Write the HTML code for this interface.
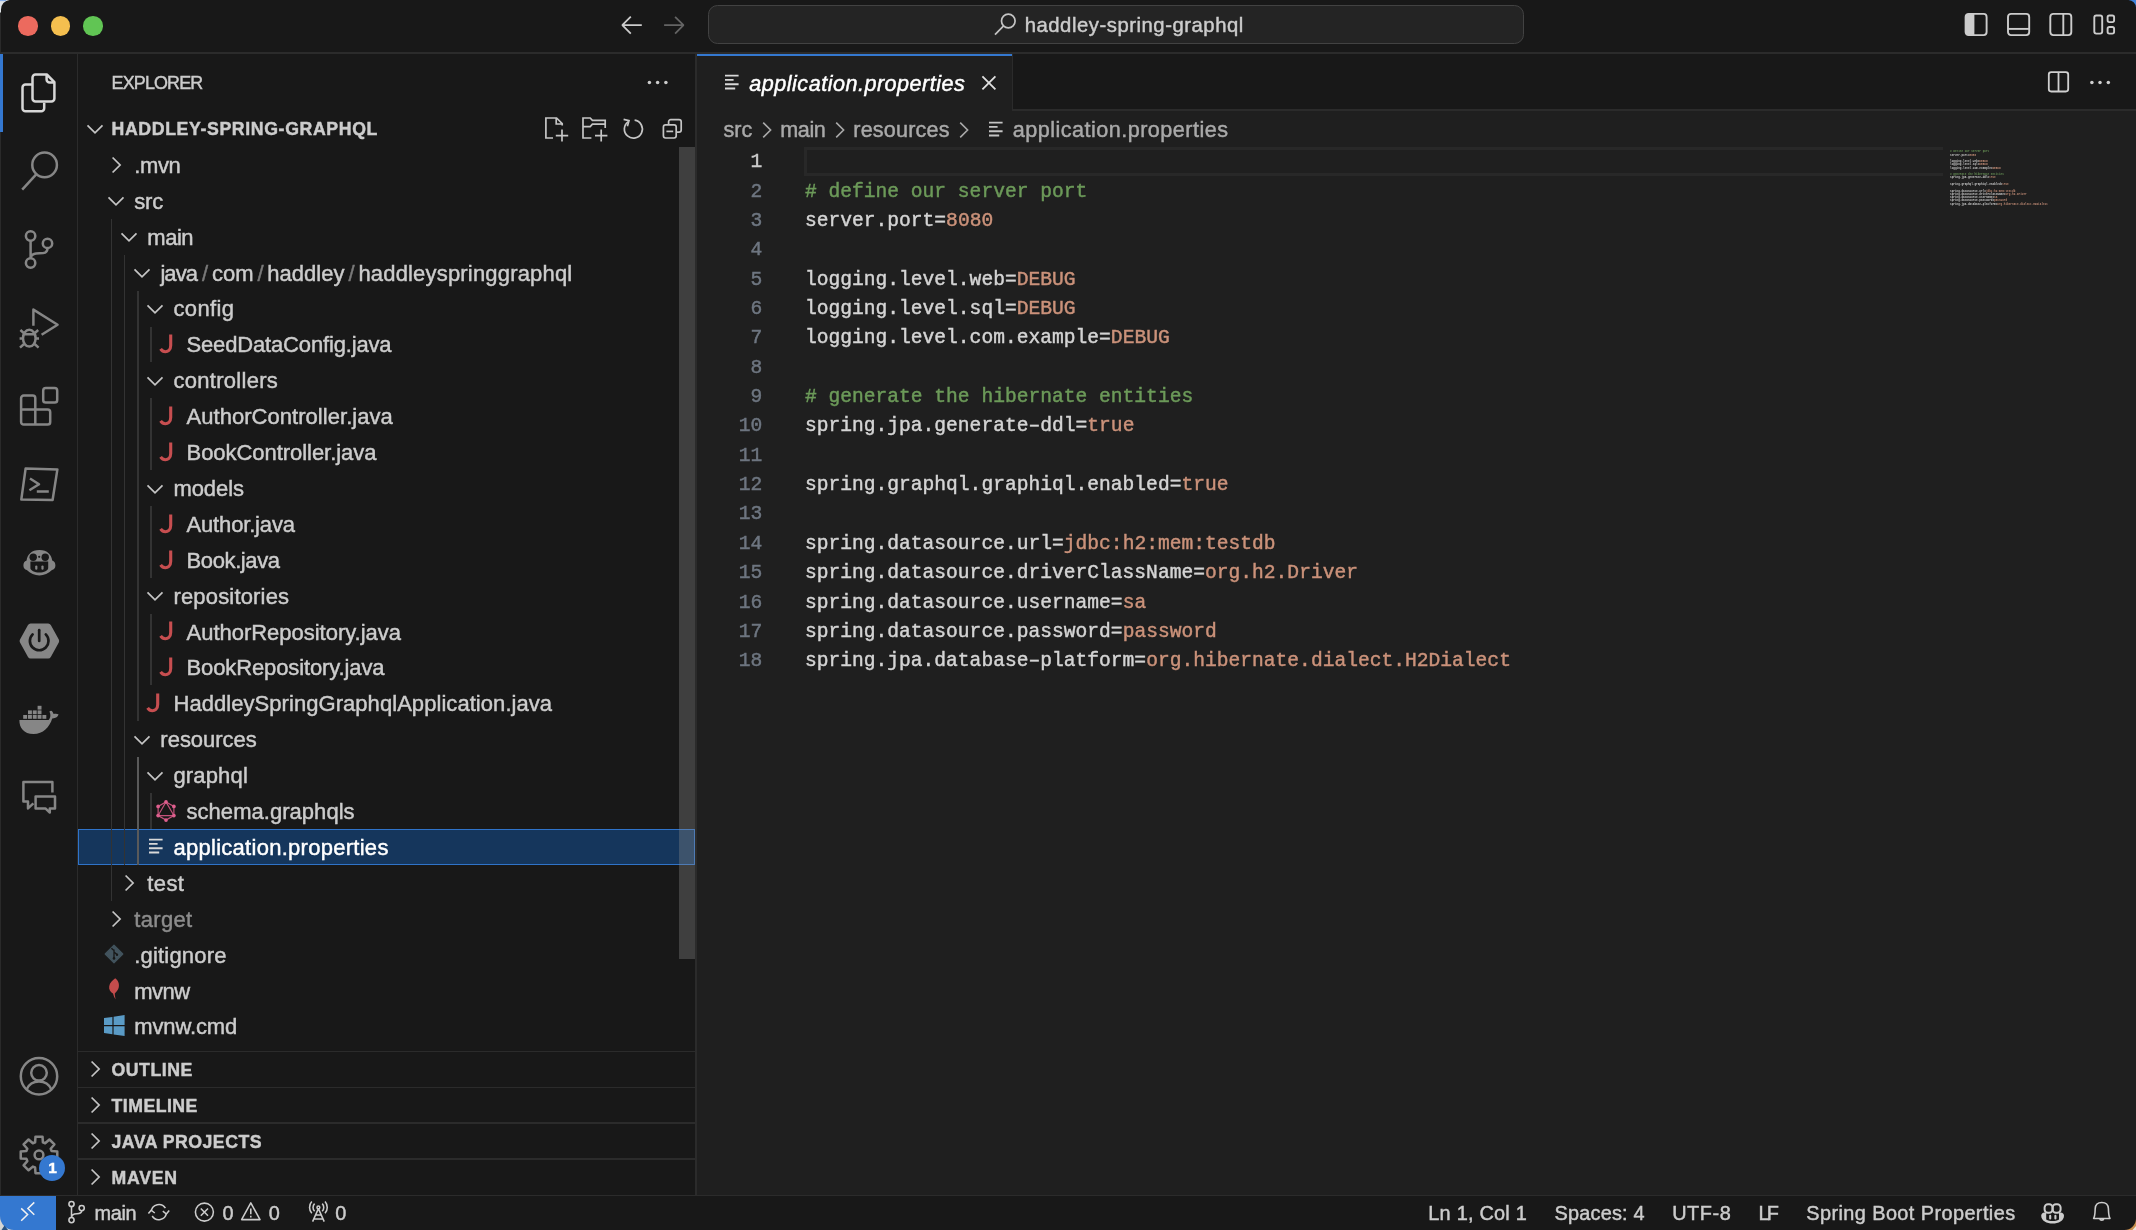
<!DOCTYPE html>
<html><head><meta charset="utf-8"><title>application.properties - haddley-spring-graphql</title>
<style>
html,body{margin:0;padding:0;background:#181818;overflow:hidden}
body{width:2136px;height:1230px;position:relative;font-family:"Liberation Sans", sans-serif;color:#ccc}
#app{position:absolute;left:0;top:0;width:2136px;height:1230px;will-change:transform;transform:translateZ(0)}
.a{position:absolute}
.t{position:absolute;white-space:pre;display:block;-webkit-text-stroke:0.45px currentColor}
svg{position:absolute;overflow:visible}

.bd{background:#2b2b2b}

</style></head><body>
<div id='app'>
<div class='a' style='left:697px;top:54px;width:1439px;height:1141px;background:#1f1f1f;'></div>
<div class='a' style='left:697px;top:54px;width:1439px;height:55px;background:#181818;'></div>
<div class='a' style='left:697px;top:109px;width:1439px;height:1.6px;background:#2b2b2b;'></div>
<div class='a' style='left:697px;top:54px;width:315px;height:57px;background:#1f1f1f;'></div>
<div class='a' style='left:1012px;top:54px;width:1.4px;height:55px;background:#2b2b2b;'></div>
<div class='a' style='left:0px;top:52.2px;width:2136px;height:1.8px;background:#2b2b2b;'></div>
<div class='a' style='left:697px;top:54.0px;width:315px;height:1.7px;background:#3478d0;'></div>
<div class='a' style='left:76.8px;top:54px;width:1.4px;height:1141px;background:#2b2b2b;'></div>
<div class='a' style='left:695.2px;top:54px;width:1.8px;height:1141px;background:#2b2b2b;'></div>
<div class='a' style='left:0px;top:1194.6px;width:2136px;height:1.5px;background:#2b2b2b;'></div>
<div class='a' style='left:0px;top:10px;width:1px;height:1210px;background:#2a2a2a;'></div>
<div class='a' style='left:0px;top:54px;width:3.3px;height:78px;background:#3478d0;'></div>
<div class='a' style='left:0px;top:1196px;width:55.5px;height:34px;background:#3478d0;'></div>
<svg style='left:0;top:0' width='14' height='14'><path d='M0 0H9.5A9.5 9.5 0 0 0 1 9.5V12.5H0Z' fill='#dfe3e6'/><path d='M0 0H6V1.1H0Z' fill='#86aee8'/></svg>
<svg style='left:2122px;top:0' width='14' height='14'><path d='M14 0H6.5A8 8 0 0 1 14 7.500Z' fill='#3f83db'/></svg>
<svg style='left:0;top:1214px' width='16' height='16'><path d='M0 16V2A14 14 0 0 0 14 16Z' fill='#d6d6d4'/><path d='M1.5 16 L4.5 11.500 L8 16Z' fill='#27507f'/></svg>
<svg style='left:2122px;top:1216px' width='14' height='14'><path d='M14 14V3A11.5 11.5 0 0 1 2.5 14Z' fill='#c98f4e'/><path d='M14 14V10L10.500 14Z' fill='#ece6dc'/></svg><div class='a' style='left:18.0px;top:16.1px;width:19.6px;height:19.6px;border-radius:50%;background:#ec6a5e'></div>
<div class='a' style='left:50.5px;top:16.1px;width:19.6px;height:19.6px;border-radius:50%;background:#f4bf4f'></div>
<div class='a' style='left:83.1px;top:16.1px;width:19.6px;height:19.6px;border-radius:50%;background:#61c554'></div>
<svg style='left:615px;top:10px' width='30' height='30' viewBox='0 0 30 30' ><path d='M26.8 15.2H7.6 M15.8 6.7 L7.3 15.2 L15.8 23.7' fill='none' stroke='#cccccc' stroke-width='1.8' stroke-linejoin='bevel'/></svg>
<svg style='left:660px;top:10px' width='30' height='30' viewBox='0 0 30 30' ><path d='M4.1 15.2H23.2 M15.1 6.8 L23.5 15.2 L15.1 23.6' fill='none' stroke='#646464' stroke-width='1.8' stroke-linejoin='bevel'/></svg>
<div class='a' style='left:708px;top:5px;width:816px;height:39px;box-sizing:border-box;border:1.8px solid #424242;border-radius:9.5px;background:#242424'></div>
<svg style='left:990px;top:10px' width='30' height='30' viewBox='0 0 30 30' ><circle cx='18.3' cy='11' r='6.8' fill='none' stroke='#c4c4c4' stroke-width='1.7'/><path d='M13.6 15.9 L5 24.6' stroke='#c4c4c4' stroke-width='1.7' fill='none'/></svg>
<span class='t' style='left:1024.70px;top:9.00px;font:normal 400 20.3px/32px "Liberation Sans", sans-serif;color:#cccccc;letter-spacing:0.531px;'>haddley-spring-graphql</span>
<svg style='left:1962px;top:10px' width='30' height='30' viewBox='0 0 30 30' ><rect x='3.6' y='3.9' width='21' height='21.2' rx='3' fill='none' stroke='#cccccc' stroke-width='1.9'/><path d='M3.6 6.9 a3 3 0 0 1 3-3 H12.4 V25.1 H6.6 a3 3 0 0 1 -3-3Z' fill='#cccccc'/></svg>
<svg style='left:2004px;top:10px' width='30' height='30' viewBox='0 0 30 30' ><rect x='4' y='3.9' width='21.2' height='21.2' rx='3' fill='none' stroke='#cccccc' stroke-width='1.9'/><path d='M4 18.9H25.2' fill='none' stroke='#cccccc' stroke-width='1.9'/></svg>
<svg style='left:2046px;top:10px' width='30' height='30' viewBox='0 0 30 30' ><rect x='4.3' y='3.9' width='21' height='21.2' rx='3' fill='none' stroke='#cccccc' stroke-width='1.9'/><path d='M17.3 3.9V25.1' fill='none' stroke='#cccccc' stroke-width='1.9'/></svg>
<svg style='left:2090px;top:10px' width='30' height='30' viewBox='0 0 30 30' ><rect x='4.3' y='5.5' width='7.9' height='18.1' rx='2' fill='none' stroke='#cccccc' stroke-width='1.9'/><rect x='17.6' y='5.5' width='6.5' height='6.6' rx='1.8' fill='none' stroke='#cccccc' stroke-width='1.9'/><rect x='17.6' y='17' width='6.5' height='6.6' rx='1.8' fill='none' stroke='#cccccc' stroke-width='1.9'/></svg>
<svg style='left:15px;top:66px' width='50' height='54' viewBox='0 0 50 54' ><path d='M20.2 18.6 H10.5 a3 3 0 0 0 -3 3 V42.2 a3 3 0 0 0 3 3 H26.2 a3 3 0 0 0 3 -3 V36.8' fill='none' stroke='#d7d7d7' stroke-width='2.5' stroke-linejoin='round' stroke-linecap='butt'/><rect x='17.5' y='8.5' width='22' height='27' rx='3.4' fill='#181818' stroke='none'/><path d='M20.5 8.5 H31.8 L39.4 16.2 V32.5 a3 3 0 0 1 -3 3 H20.5 a3 3 0 0 1 -3 -3 V11.5 a3 3 0 0 1 3 -3 Z M31.6 8.9 V13.4 a3 3 0 0 0 3 3 H39.2' fill='none' stroke='#d7d7d7' stroke-width='2.5' stroke-linejoin='round' stroke-linecap='butt'/></svg>
<svg style='left:15px;top:145px' width='50' height='54' viewBox='0 0 50 54' ><circle cx='29.6' cy='19.9' r='12.3' fill='none' stroke='#868686' stroke-width='2.5' stroke-linejoin='round' stroke-linecap='butt'/><path d='M21.2 29.4 L7.2 44.6' fill='none' stroke='#868686' stroke-width='2.5' stroke-linejoin='round' stroke-linecap='butt'/></svg>
<svg style='left:15px;top:223px' width='50' height='54' viewBox='0 0 50 54' ><circle cx='15.6' cy='13' r='4.7' fill='none' stroke='#868686' stroke-width='2.5' stroke-linejoin='round' stroke-linecap='butt'/><circle cx='32.5' cy='20.4' r='4.7' fill='none' stroke='#868686' stroke-width='2.5' stroke-linejoin='round' stroke-linecap='butt'/><circle cx='15.6' cy='40' r='4.7' fill='none' stroke='#868686' stroke-width='2.5' stroke-linejoin='round' stroke-linecap='butt'/><path d='M15.6 17.7 V35.3 M32.5 25.1 C32.5 31.5 27 30 21 30.4 C17.5 30.8 15.8 32.6 15.6 35.3' fill='none' stroke='#868686' stroke-width='2.5' stroke-linejoin='round' stroke-linecap='butt'/></svg>
<svg style='left:15px;top:301px' width='50' height='54' viewBox='0 0 50 54' ><path d='M18.4 24.8 V8.6 L42.6 23.7 L26.6 33.8' fill='none' stroke='#868686' stroke-width='2.5' stroke-linejoin='round' stroke-linecap='butt'/><ellipse cx='14.3' cy='37.2' rx='6.3' ry='8.4' fill='none' stroke='#868686' stroke-width='2.5' stroke-linejoin='round' stroke-linecap='butt'/><path d='M8.4 33.3 H20.2 M4.6 37.6 H8 M20.6 37.6 H24 M9 32.2 L5.4 29 M19.6 32.2 L23.2 29 M9 43 L5 46.6 M19.6 43 L23.6 46.6' fill='none' stroke='#868686' stroke-width='2.5' stroke-linejoin='round' stroke-linecap='butt'/></svg>
<svg style='left:15px;top:380px' width='50' height='54' viewBox='0 0 50 54' ><rect x='28.2' y='8.1' width='14' height='14.4' rx='2.6' fill='none' stroke='#868686' stroke-width='2.5' stroke-linejoin='round' stroke-linecap='butt'/><path d='M8.7 15.6 H17.7 a2.6 2.6 0 0 1 2.6 2.6 V29.6 H32.6 a2.6 2.6 0 0 1 2.6 2.6 V42 a2.6 2.6 0 0 1 -2.6 2.6 H8.7 a2.6 2.6 0 0 1 -2.6 -2.6 V18.2 a2.6 2.6 0 0 1 2.6 -2.6 Z M6.1 29.6 H20.3 V44.6' fill='none' stroke='#868686' stroke-width='2.5' stroke-linejoin='round' stroke-linecap='butt'/></svg>
<svg style='left:15px;top:458px' width='50' height='54' viewBox='0 0 50 54' ><path d='M10.6 10.6 L42.4 11.4 L37.6 42 L6.3 41.6 Z' fill='none' stroke='#868686' stroke-width='2.5' stroke-linejoin='round' stroke-linecap='butt'/><path d='M15 20.5 L24 26.3 L14.4 32.2 M21.8 33.5 H33.8' fill='none' stroke='#868686' stroke-width='2.5' stroke-linejoin='round' stroke-linecap='butt'/></svg>
<svg style='left:15px;top:536px' width='50' height='54' viewBox='0 0 50 54' ><path d='M24.4 14 C32.5 14 36.6 19 37.2 24.4 C39.4 25 40.4 27 40.4 29.4 C40.4 32 39 33.4 37 34 C33.6 37.4 29 39.4 24.4 39.4 C19.8 39.4 15.2 37.4 11.8 34 C9.8 33.4 8.4 32 8.4 29.4 C8.4 27 9.4 25 11.6 24.4 C12.2 19 16.3 14 24.4 14 Z' fill='#868686'/><circle cx='18.2' cy='21.2' r='3.7' fill='#181818'/><circle cx='30.2' cy='21.2' r='3.7' fill='#181818'/><circle cx='24.2' cy='20.8' r='1.1' fill='#181818'/><path d='M15.4 25.6 H33.2 V32 C33.2 34.6 29 36.6 24.3 36.6 C19.6 36.6 15.4 34.6 15.4 32 Z' fill='#181818'/><rect x='20.2' y='29.4' width='2.2' height='4.4' rx='1.1' fill='#868686'/><rect x='26.4' y='29.4' width='2.2' height='4.4' rx='1.1' fill='#868686'/></svg>
<svg style='left:15px;top:614px' width='50' height='54' viewBox='0 0 50 54' ><path d='M15.6 9.6 H33.2 a3 3 0 0 1 2.6 1.5 L43.8 25.5 a3 3 0 0 1 0 3 L35.8 42.9 a3 3 0 0 1 -2.6 1.5 H15.6 a3 3 0 0 1 -2.6 -1.5 L5 28.5 a3 3 0 0 1 0 -3 L13 11.100 a3 3 0 0 1 2.6 -1.5 Z' fill='#868686'/><path d='M17.6 20.4 A9.3 9.3 0 1 0 30.8 20.4' fill='none' stroke='#181818' stroke-width='2.7' stroke-linecap='round'/><path d='M24.2 16.2 V27' stroke='#181818' stroke-width='2.7' stroke-linecap='round'/></svg>
<svg style='left:15px;top:692px' width='50' height='54' viewBox='0 0 50 54' ><g fill='#868686'><rect x='8.2' y='23.0' width='3.9' height='3.8'/><rect x='13.0' y='23.0' width='3.9' height='3.8'/><rect x='17.8' y='23.0' width='3.9' height='3.8'/><rect x='22.6' y='23.0' width='3.9' height='3.8'/><rect x='27.4' y='23.0' width='3.9' height='3.8'/><rect x='13.0' y='18.4' width='3.9' height='3.8'/><rect x='17.8' y='18.4' width='3.9' height='3.8'/><rect x='22.6' y='18.4' width='3.9' height='3.8'/><rect x='22.6' y='13.8' width='3.9' height='3.8'/><path d='M4.4 28 H33.6 C35.6 26.4 36 22.6 34.4 19.6 C36.6 17.4 37.6 19.6 38.6 22 C40.6 21.4 42.6 21.6 43.6 22.6 C42.6 25.4 39.8 26.6 37.2 26.4 C34.6 35 28 42 18.6 42 C8.6 42 4.2 35.6 4.4 28 Z'/></g></svg>
<svg style='left:15px;top:771px' width='50' height='54' viewBox='0 0 50 54' ><path d='M37.4 21.6 V11 H8.4 V30.4 H13 V37.4 L18.4 32.4' fill='none' stroke='#868686' stroke-width='2.5' stroke-linejoin='round' stroke-linecap='butt'/><path d='M20.6 25.6 H40 V37.4 H34.8 V41.6 L30.4 37.4 H20.6 Z' fill='none' stroke='#868686' stroke-width='2.5' stroke-linejoin='round' stroke-linecap='butt'/></svg>
<svg style='left:15px;top:1050px' width='50' height='54' viewBox='0 0 50 54' ><circle cx='24' cy='26.3' r='18.2' fill='none' stroke='#868686' stroke-width='2.5' stroke-linejoin='round' stroke-linecap='butt'/><circle cx='24' cy='22.8' r='7.8' fill='none' stroke='#868686' stroke-width='2.5' stroke-linejoin='round' stroke-linecap='butt'/><path d='M11.6 39.4 C14 33.8 18.4 31.4 24 31.4 C29.6 31.4 34 33.8 36.4 39.4' fill='none' stroke='#868686' stroke-width='2.5' stroke-linejoin='round' stroke-linecap='butt'/></svg>
<svg style='left:15px;top:1127px' width='50' height='54' viewBox='0 0 50 54' ><path d='M20.10 15.29 L20.49 9.63 L27.51 9.63 L27.90 15.29 L30.16 16.22 L34.43 12.50 L39.40 17.47 L35.68 21.74 L36.61 24.00 L42.27 24.39 L42.27 31.41 L36.61 31.80 L35.68 34.06 L39.40 38.33 L34.43 43.30 L30.16 39.58 L27.90 40.51 L27.51 46.17 L20.49 46.17 L20.10 40.51 L17.84 39.58 L13.57 43.30 L8.60 38.33 L12.32 34.06 L11.39 31.80 L5.73 31.41 L5.73 24.39 L11.39 24.00 L12.32 21.74 L8.60 17.47 L13.57 12.50 L17.84 16.22 Z' fill='none' stroke='#868686' stroke-width='2.5' stroke-linejoin='round' stroke-linecap='butt'/><circle cx='24' cy='27.9' r='4.4' fill='none' stroke='#868686' stroke-width='2.5' stroke-linejoin='round' stroke-linecap='butt'/></svg>
<div class='a' style='left:39.4px;top:1154.9px;width:26px;height:26px;border-radius:50%;background:#3478d0'></div>
<span class='t' style='left:48.20px;top:1158.20px;font:normal 700 15.5px/20px "Liberation Sans", sans-serif;color:#ffffff;letter-spacing:0.000px;'>1</span><div class='a' style='left:78.4px;top:828.60px;width:616.6px;height:36.30px;background:#15365c;box-sizing:border-box;border:1.6px solid #2f73c9'></div>
<div class='a' style='left:110.65px;top:218.80px;width:1.7px;height:682.10px;background:#333333'></div>
<div class='a' style='left:123.75px;top:254.70px;width:1.7px;height:610.30px;background:#333333'></div>
<div class='a' style='left:136.85px;top:290.60px;width:1.7px;height:430.80px;background:#333333'></div>
<div class='a' style='left:136.85px;top:757.30px;width:1.7px;height:107.70px;background:#5a5a5a'></div>
<div class='a' style='left:149.95px;top:326.50px;width:1.7px;height:35.90px;background:#333333'></div>
<div class='a' style='left:149.95px;top:398.30px;width:1.7px;height:71.80px;background:#333333'></div>
<div class='a' style='left:149.95px;top:506.00px;width:1.7px;height:71.80px;background:#333333'></div>
<div class='a' style='left:149.95px;top:613.70px;width:1.7px;height:71.80px;background:#333333'></div>
<div class='a' style='left:149.95px;top:793.20px;width:1.7px;height:35.90px;background:#333333'></div>
<svg style='left:106.0px;top:154.95px' width='20' height='20' viewBox='0 0 20 20' ><path d='M6.6 2.5 L14.1 10 L6.6 17.5' fill='none' stroke='#c5c5c5' stroke-width='1.7' stroke-linecap='butt' stroke-linejoin='miter'/></svg>
<span class='t' style='left:134.20px;top:147.85px;font:normal 400 22px/36px "Liberation Sans", sans-serif;color:#cccccc;letter-spacing:-0.362px;'>.mvn</span>
<svg style='left:106.0px;top:191.35px' width='20' height='20' viewBox='0 0 20 20' ><path d='M2.5 6.3 L10 13.8 L17.5 6.3' fill='none' stroke='#c5c5c5' stroke-width='1.7' stroke-linecap='butt' stroke-linejoin='miter'/></svg>
<span class='t' style='left:134.20px;top:183.75px;font:normal 400 22px/36px "Liberation Sans", sans-serif;color:#cccccc;letter-spacing:-0.114px;'>src</span>
<svg style='left:119.08000000000001px;top:227.25px' width='20' height='20' viewBox='0 0 20 20' ><path d='M2.5 6.3 L10 13.8 L17.5 6.3' fill='none' stroke='#c5c5c5' stroke-width='1.7' stroke-linecap='butt' stroke-linejoin='miter'/></svg>
<span class='t' style='left:147.28px;top:219.65px;font:normal 400 22px/36px "Liberation Sans", sans-serif;color:#cccccc;letter-spacing:-0.456px;'>main</span>
<svg style='left:132.16px;top:263.15px' width='20' height='20' viewBox='0 0 20 20' ><path d='M2.5 6.3 L10 13.8 L17.5 6.3' fill='none' stroke='#c5c5c5' stroke-width='1.7' stroke-linecap='butt' stroke-linejoin='miter'/></svg>
<span class='t' style='left:160.40px;top:255.55px;font:normal 400 22px/36px "Liberation Sans", sans-serif;color:#cccccc;letter-spacing:-0.920px;'>java</span>
<span class='t' style='left:212.00px;top:255.55px;font:normal 400 22px/36px "Liberation Sans", sans-serif;color:#cccccc;letter-spacing:0.019px;'>com</span>
<span class='t' style='left:267.30px;top:255.55px;font:normal 400 22px/36px "Liberation Sans", sans-serif;color:#cccccc;letter-spacing:0.004px;'>haddley</span>
<span class='t' style='left:358.40px;top:255.55px;font:normal 400 22px/36px "Liberation Sans", sans-serif;color:#cccccc;letter-spacing:0.180px;'>haddleyspringgraphql</span>
<span class='t' style='left:202.00px;top:255.55px;font:normal 400 22px/36px "Liberation Sans", sans-serif;color:#7a7a7a;letter-spacing:0.000px;'>/</span>
<span class='t' style='left:257.40px;top:255.55px;font:normal 400 22px/36px "Liberation Sans", sans-serif;color:#7a7a7a;letter-spacing:0.000px;'>/</span>
<span class='t' style='left:348.40px;top:255.55px;font:normal 400 22px/36px "Liberation Sans", sans-serif;color:#7a7a7a;letter-spacing:0.000px;'>/</span>
<svg style='left:145.24px;top:299.05px' width='20' height='20' viewBox='0 0 20 20' ><path d='M2.5 6.3 L10 13.8 L17.5 6.3' fill='none' stroke='#c5c5c5' stroke-width='1.7' stroke-linecap='butt' stroke-linejoin='miter'/></svg>
<span class='t' style='left:173.44px;top:291.45px;font:normal 400 22px/36px "Liberation Sans", sans-serif;color:#cccccc;letter-spacing:0.388px;'>config</span>
<span class='t' style='left:186.52px;top:327.35px;font:normal 400 22px/36px "Liberation Sans", sans-serif;color:#cccccc;letter-spacing:-0.158px;'>SeedDataConfig.java</span>
<svg style='left:158.21999999999997px;top:333.25px' width='18' height='24' viewBox='0 0 18 24' ><path d='M12.7 1.6 V12.6 C12.7 17.4 9.6 18.7 7.4 18.7 C5.3 18.7 3.7 17.6 2.6 15.9' fill='none' stroke='#c74e50' stroke-width='3.1'/></svg>
<svg style='left:145.24px;top:370.84999999999997px' width='20' height='20' viewBox='0 0 20 20' ><path d='M2.5 6.3 L10 13.8 L17.5 6.3' fill='none' stroke='#c5c5c5' stroke-width='1.7' stroke-linecap='butt' stroke-linejoin='miter'/></svg>
<span class='t' style='left:173.44px;top:363.25px;font:normal 400 22px/36px "Liberation Sans", sans-serif;color:#cccccc;letter-spacing:0.288px;'>controllers</span>
<span class='t' style='left:186.52px;top:399.15px;font:normal 400 22px/36px "Liberation Sans", sans-serif;color:#cccccc;letter-spacing:0.041px;'>AuthorController.java</span>
<svg style='left:158.21999999999997px;top:405.04999999999995px' width='18' height='24' viewBox='0 0 18 24' ><path d='M12.7 1.6 V12.6 C12.7 17.4 9.6 18.7 7.4 18.7 C5.3 18.7 3.7 17.6 2.6 15.9' fill='none' stroke='#c74e50' stroke-width='3.1'/></svg>
<span class='t' style='left:186.52px;top:435.05px;font:normal 400 22px/36px "Liberation Sans", sans-serif;color:#cccccc;letter-spacing:-0.045px;'>BookController.java</span>
<svg style='left:158.21999999999997px;top:440.95px' width='18' height='24' viewBox='0 0 18 24' ><path d='M12.7 1.6 V12.6 C12.7 17.4 9.6 18.7 7.4 18.7 C5.3 18.7 3.7 17.6 2.6 15.9' fill='none' stroke='#c74e50' stroke-width='3.1'/></svg>
<svg style='left:145.24px;top:478.54999999999995px' width='20' height='20' viewBox='0 0 20 20' ><path d='M2.5 6.3 L10 13.8 L17.5 6.3' fill='none' stroke='#c5c5c5' stroke-width='1.7' stroke-linecap='butt' stroke-linejoin='miter'/></svg>
<span class='t' style='left:173.44px;top:470.95px;font:normal 400 22px/36px "Liberation Sans", sans-serif;color:#cccccc;letter-spacing:-0.072px;'>models</span>
<span class='t' style='left:186.52px;top:506.85px;font:normal 400 22px/36px "Liberation Sans", sans-serif;color:#cccccc;letter-spacing:-0.160px;'>Author.java</span>
<svg style='left:158.21999999999997px;top:512.75px' width='18' height='24' viewBox='0 0 18 24' ><path d='M12.7 1.6 V12.6 C12.7 17.4 9.6 18.7 7.4 18.7 C5.3 18.7 3.7 17.6 2.6 15.9' fill='none' stroke='#c74e50' stroke-width='3.1'/></svg>
<span class='t' style='left:186.52px;top:542.75px;font:normal 400 22px/36px "Liberation Sans", sans-serif;color:#cccccc;letter-spacing:-0.381px;'>Book.java</span>
<svg style='left:158.21999999999997px;top:548.65px' width='18' height='24' viewBox='0 0 18 24' ><path d='M12.7 1.6 V12.6 C12.7 17.4 9.6 18.7 7.4 18.7 C5.3 18.7 3.7 17.6 2.6 15.9' fill='none' stroke='#c74e50' stroke-width='3.1'/></svg>
<svg style='left:145.24px;top:586.25px' width='20' height='20' viewBox='0 0 20 20' ><path d='M2.5 6.3 L10 13.8 L17.5 6.3' fill='none' stroke='#c5c5c5' stroke-width='1.7' stroke-linecap='butt' stroke-linejoin='miter'/></svg>
<span class='t' style='left:173.44px;top:578.65px;font:normal 400 22px/36px "Liberation Sans", sans-serif;color:#cccccc;letter-spacing:0.176px;'>repositories</span>
<span class='t' style='left:186.52px;top:614.55px;font:normal 400 22px/36px "Liberation Sans", sans-serif;color:#cccccc;letter-spacing:-0.017px;'>AuthorRepository.java</span>
<svg style='left:158.21999999999997px;top:620.45px' width='18' height='24' viewBox='0 0 18 24' ><path d='M12.7 1.6 V12.6 C12.7 17.4 9.6 18.7 7.4 18.7 C5.3 18.7 3.7 17.6 2.6 15.9' fill='none' stroke='#c74e50' stroke-width='3.1'/></svg>
<span class='t' style='left:186.52px;top:650.45px;font:normal 400 22px/36px "Liberation Sans", sans-serif;color:#cccccc;letter-spacing:-0.114px;'>BookRepository.java</span>
<svg style='left:158.21999999999997px;top:656.3499999999999px' width='18' height='24' viewBox='0 0 18 24' ><path d='M12.7 1.6 V12.6 C12.7 17.4 9.6 18.7 7.4 18.7 C5.3 18.7 3.7 17.6 2.6 15.9' fill='none' stroke='#c74e50' stroke-width='3.1'/></svg>
<span class='t' style='left:173.44px;top:686.35px;font:normal 400 22px/36px "Liberation Sans", sans-serif;color:#cccccc;letter-spacing:0.056px;'>HaddleySpringGraphqlApplication.java</span>
<svg style='left:145.14px;top:692.25px' width='18' height='24' viewBox='0 0 18 24' ><path d='M12.7 1.6 V12.6 C12.7 17.4 9.6 18.7 7.4 18.7 C5.3 18.7 3.7 17.6 2.6 15.9' fill='none' stroke='#c74e50' stroke-width='3.1'/></svg>
<svg style='left:132.16px;top:729.85px' width='20' height='20' viewBox='0 0 20 20' ><path d='M2.5 6.3 L10 13.8 L17.5 6.3' fill='none' stroke='#c5c5c5' stroke-width='1.7' stroke-linecap='butt' stroke-linejoin='miter'/></svg>
<span class='t' style='left:160.36px;top:722.25px;font:normal 400 22px/36px "Liberation Sans", sans-serif;color:#cccccc;letter-spacing:-0.019px;'>resources</span>
<svg style='left:145.24px;top:765.75px' width='20' height='20' viewBox='0 0 20 20' ><path d='M2.5 6.3 L10 13.8 L17.5 6.3' fill='none' stroke='#c5c5c5' stroke-width='1.7' stroke-linecap='butt' stroke-linejoin='miter'/></svg>
<span class='t' style='left:173.44px;top:758.15px;font:normal 400 22px/36px "Liberation Sans", sans-serif;color:#cccccc;letter-spacing:0.162px;'>graphql</span>
<span class='t' style='left:186.52px;top:794.05px;font:normal 400 22px/36px "Liberation Sans", sans-serif;color:#cccccc;letter-spacing:0.038px;'>schema.graphqls</span>
<svg style='left:154.0px;top:798.55px' width='24' height='24' viewBox='0 0 24 24' ><path d='M12.00 2.90 L19.88 7.45 L19.88 16.55 L12.00 21.10 L4.12 16.55 L4.12 7.45 Z' fill='none' stroke='#c2527a' stroke-width='1.2'/><path d='M12.00 2.90 L19.88 16.55 L4.12 16.55 Z' fill='none' stroke='#c2527a' stroke-width='1.2'/><circle cx='12.00' cy='2.90' r='1.85' fill='#df5f8e'/><circle cx='19.88' cy='7.45' r='1.85' fill='#df5f8e'/><circle cx='19.88' cy='16.55' r='1.85' fill='#df5f8e'/><circle cx='12.00' cy='21.10' r='1.85' fill='#df5f8e'/><circle cx='4.12' cy='16.55' r='1.85' fill='#df5f8e'/><circle cx='4.12' cy='7.45' r='1.85' fill='#df5f8e'/></svg>
<span class='t' style='left:173.44px;top:829.95px;font:normal 400 22px/36px "Liberation Sans", sans-serif;color:#ffffff;letter-spacing:0.277px;'>application.properties</span>
<svg style='left:149.24px;top:837.45px' width='16' height='18' viewBox='0 0 16 18' ><path d='M0 2.6H13.6 M0 6.9H8.6 M0 11.2H13.6 M0 15.5H10.2' stroke='#d8d8d8' stroke-width='1.9' fill='none'/></svg>
<svg style='left:119.08000000000001px;top:872.95px' width='20' height='20' viewBox='0 0 20 20' ><path d='M6.6 2.5 L14.1 10 L6.6 17.5' fill='none' stroke='#c5c5c5' stroke-width='1.7' stroke-linecap='butt' stroke-linejoin='miter'/></svg>
<span class='t' style='left:147.28px;top:865.85px;font:normal 400 22px/36px "Liberation Sans", sans-serif;color:#cccccc;letter-spacing:0.417px;'>test</span>
<svg style='left:106.0px;top:908.85px' width='20' height='20' viewBox='0 0 20 20' ><path d='M6.6 2.5 L14.1 10 L6.6 17.5' fill='none' stroke='#c5c5c5' stroke-width='1.7' stroke-linecap='butt' stroke-linejoin='miter'/></svg>
<span class='t' style='left:134.20px;top:901.75px;font:normal 400 22px/36px "Liberation Sans", sans-serif;color:#8c8c8c;letter-spacing:0.347px;'>target</span>
<span class='t' style='left:134.20px;top:937.65px;font:normal 400 22px/36px "Liberation Sans", sans-serif;color:#cccccc;letter-spacing:0.198px;'>.gitignore</span>
<svg style='left:101.7px;top:942.15px' width='24' height='24' viewBox='0 0 24 24' ><path d='M12 3.2 L20.8 12 L12 20.8 L3.2 12 Z' fill='#42535d' stroke='#42535d' stroke-width='1.2' stroke-linejoin='round'/><path d='M12 7.6 V16.4 M12 10 L15 12.6 M9.4 6.2 L12 8.6' stroke='#181818' stroke-width='1.3' fill='none'/><circle cx='12' cy='16.4' r='1.3' fill='#181818'/><circle cx='15' cy='12.8' r='1.2' fill='#181818'/></svg>
<span class='t' style='left:134.20px;top:973.55px;font:normal 400 22px/36px "Liberation Sans", sans-serif;color:#cccccc;letter-spacing:-0.518px;'>mvnw</span>
<svg style='left:104.2px;top:976.05px' width='20' height='26' viewBox='0 0 20 26' ><path d='M11.2 2.2 C14.6 4.6 15.6 8.6 14.6 12 C13.8 14.6 11.8 16.2 10.8 17.6 C10.8 20 11.4 22 11.6 23.6 C10.4 21.6 9.6 19.6 9 17.4 C6.4 16 4.6 13.6 5.2 10.2 C5.8 6.8 8.4 4.4 11.2 2.2 Z' fill='#c44c4c'/></svg>
<span class='t' style='left:134.20px;top:1009.45px;font:normal 400 22px/36px "Liberation Sans", sans-serif;color:#cccccc;letter-spacing:-0.117px;'>mvnw.cmd</span>
<svg style='left:103.5px;top:1014.9499999999999px' width='22' height='22' viewBox='0 0 22 22' ><path d='M0 3 L8.4 1.9 V10 H0 Z M9.6 1.7 L20.6 0 V10 H9.6 Z M0 11.2 H8.4 V19.3 L0 18.1 Z M9.6 11.2 H20.6 V21 L9.6 19.5 Z' fill='#5a9bc6'/></svg>
<span class='t' style='left:111.60px;top:67.60px;font:normal 400 17.9px/30px "Liberation Sans", sans-serif;color:#cccccc;letter-spacing:-0.836px;'>EXPLORER</span>
<svg style='left:640px;top:72px' width='36' height='20' viewBox='0 0 36 20' ><circle cx='9.4' cy='10.4' r='1.75' fill='#cccccc'/><circle cx='17.6' cy='10.4' r='1.75' fill='#cccccc'/><circle cx='25.9' cy='10.4' r='1.75' fill='#cccccc'/></svg>
<svg style='left:84.9px;top:119.19999999999999px' width='20' height='20' viewBox='0 0 20 20' ><path d='M2.5 6.3 L10 13.8 L17.5 6.3' fill='none' stroke='#c5c5c5' stroke-width='1.7' stroke-linecap='butt' stroke-linejoin='miter'/></svg>
<span class='t' style='left:111.50px;top:113.90px;font:normal 700 17.7px/30px "Liberation Sans", sans-serif;color:#cccccc;letter-spacing:0.635px;'>HADDLEY-SPRING-GRAPHQL</span>
<svg style='left:540px;top:112px' width='34' height='34' viewBox='0 0 34 34' ><path d='M22.2 13.6 V11.6 L16.6 6 H5.9 V26 H13 M16.2 6.2 V12 H22 M22 17.4 V29.6 M15.8 23.6 H28.2' fill='none' stroke='#c5c5c5' stroke-width='1.7'/></svg>
<svg style='left:578px;top:112px' width='34' height='34' viewBox='0 0 34 34' ><path d='M27.2 16 V8.4 H14.4 L12.2 6 H5 V26 H13.4 M5 14.6 H12.2 L14.4 12.2 H27.2 M23.2 17.4 V29.6 M17 23.6 H29.4' fill='none' stroke='#c5c5c5' stroke-width='1.7'/></svg>
<svg style='left:618px;top:112px' width='34' height='34' viewBox='0 0 34 34' ><path d='M10.4 9.6 A9 9 0 1 0 16.6 8.2' fill='none' stroke='#c5c5c5' stroke-width='1.7'/><path d='M5.6 7.4 L11 8.6 L9.4 14.2' fill='none' stroke='#c5c5c5' stroke-width='1.7'/></svg>
<svg style='left:657px;top:112px' width='34' height='34' viewBox='0 0 34 34' ><path d='M11.6 12.6 V9.8 a2.2 2.2 0 0 1 2.2 -2.2 H22 a2.2 2.2 0 0 1 2.2 2.2 V18 a2.2 2.2 0 0 1 -2.2 2.2 H19.6' fill='none' stroke='#c5c5c5' stroke-width='1.7'/><rect x='6.4' y='12.8' width='12.8' height='13.2' rx='2.2' fill='none' stroke='#c5c5c5' stroke-width='1.7'/><path d='M9.4 19.4 H16.2' fill='none' stroke='#c5c5c5' stroke-width='1.7'/></svg>
<div class='a' style='left:678.8px;top:147px;width:16.4px;height:811.8px;background:rgba(140,140,140,0.335)'></div>
<div class='a' style='left:78.2px;top:1050.5px;width:617px;height:1.5px;background:#2b2b2b'></div>
<svg style='left:85.2px;top:1059.3px' width='20' height='20' viewBox='0 0 20 20' ><path d='M6.6 2.5 L14.1 10 L6.6 17.5' fill='none' stroke='#c5c5c5' stroke-width='1.7' stroke-linecap='butt' stroke-linejoin='miter'/></svg>
<span class='t' style='left:111.50px;top:1054.80px;font:normal 700 17.7px/30px "Liberation Sans", sans-serif;color:#cccccc;letter-spacing:0.546px;'>OUTLINE</span>
<div class='a' style='left:78.2px;top:1086.5px;width:617px;height:1.5px;background:#2b2b2b'></div>
<svg style='left:85.2px;top:1095.3px' width='20' height='20' viewBox='0 0 20 20' ><path d='M6.6 2.5 L14.1 10 L6.6 17.5' fill='none' stroke='#c5c5c5' stroke-width='1.7' stroke-linecap='butt' stroke-linejoin='miter'/></svg>
<span class='t' style='left:111.50px;top:1090.80px;font:normal 700 17.7px/30px "Liberation Sans", sans-serif;color:#cccccc;letter-spacing:0.479px;'>TIMELINE</span>
<div class='a' style='left:78.2px;top:1122.4px;width:617px;height:1.5px;background:#2b2b2b'></div>
<svg style='left:85.2px;top:1131.1999999999998px' width='20' height='20' viewBox='0 0 20 20' ><path d='M6.6 2.5 L14.1 10 L6.6 17.5' fill='none' stroke='#c5c5c5' stroke-width='1.7' stroke-linecap='butt' stroke-linejoin='miter'/></svg>
<span class='t' style='left:111.50px;top:1126.70px;font:normal 700 17.7px/30px "Liberation Sans", sans-serif;color:#cccccc;letter-spacing:0.487px;'>JAVA PROJECTS</span>
<div class='a' style='left:78.2px;top:1158.3px;width:617px;height:1.5px;background:#2b2b2b'></div>
<svg style='left:85.2px;top:1167.1px' width='20' height='20' viewBox='0 0 20 20' ><path d='M6.6 2.5 L14.1 10 L6.6 17.5' fill='none' stroke='#c5c5c5' stroke-width='1.7' stroke-linecap='butt' stroke-linejoin='miter'/></svg>
<span class='t' style='left:111.50px;top:1162.60px;font:normal 700 17.7px/30px "Liberation Sans", sans-serif;color:#cccccc;letter-spacing:0.734px;'>MAVEN</span><svg style='left:725.4px;top:73.0px' width='16' height='18' viewBox='0 0 16 18' ><path d='M0 2.6H13.6 M0 6.9H8.6 M0 11.2H13.6 M0 15.5H10.2' stroke='#d8d8d8' stroke-width='1.9' fill='none'/></svg>
<span class='t' style='left:749.30px;top:65.60px;font:italic 400 21.6px/36px "Liberation Sans", sans-serif;color:#ffffff;letter-spacing:0.491px;'>application.properties</span>
<svg style='left:978px;top:72px' width='22' height='22' viewBox='0 0 22 22' ><path d='M4.4 4.4 L17.4 17.4 M17.4 4.4 L4.4 17.4' stroke='#e0e0e0' stroke-width='1.8' fill='none'/></svg>
<svg style='left:2044px;top:68px' width='30' height='30' viewBox='0 0 30 30' ><rect x='4.8' y='4.1' width='19.4' height='19.4' rx='2.4' fill='none' stroke='#d0d0d0' stroke-width='1.8'/><path d='M14.5 4.1 V23.5' fill='none' stroke='#d0d0d0' stroke-width='1.8'/></svg>
<svg style='left:2084px;top:72px' width='36' height='20' viewBox='0 0 36 20' ><circle cx='7.9' cy='10.4' r='1.75' fill='#d0d0d0'/><circle cx='16' cy='10.4' r='1.75' fill='#d0d0d0'/><circle cx='24.3' cy='10.4' r='1.75' fill='#d0d0d0'/></svg>
<span class='t' style='left:723.50px;top:111.60px;font:normal 400 21.6px/36px "Liberation Sans", sans-serif;color:#a9a9a9;letter-spacing:0.052px;'>src</span>
<span class='t' style='left:780.20px;top:111.60px;font:normal 400 21.6px/36px "Liberation Sans", sans-serif;color:#a9a9a9;letter-spacing:-0.404px;'>main</span>
<span class='t' style='left:853.30px;top:111.60px;font:normal 400 21.6px/36px "Liberation Sans", sans-serif;color:#a9a9a9;letter-spacing:0.173px;'>resources</span>
<span class='t' style='left:1012.80px;top:111.60px;font:normal 400 21.6px/36px "Liberation Sans", sans-serif;color:#a9a9a9;letter-spacing:0.472px;'>application.properties</span>
<svg style='left:757.0px;top:120.0px' width='20' height='20' viewBox='0 0 20 20' ><path d='M6.2 2.6 L13.6 10 L6.2 17.4' fill='none' stroke='#a9a9a9' stroke-width='1.6'/></svg>
<svg style='left:830.4px;top:120.0px' width='20' height='20' viewBox='0 0 20 20' ><path d='M6.2 2.6 L13.6 10 L6.2 17.4' fill='none' stroke='#a9a9a9' stroke-width='1.6'/></svg>
<svg style='left:954.2px;top:120.0px' width='20' height='20' viewBox='0 0 20 20' ><path d='M6.2 2.6 L13.6 10 L6.2 17.4' fill='none' stroke='#a9a9a9' stroke-width='1.6'/></svg>
<svg style='left:988.9px;top:119.9px' width='16' height='18' viewBox='0 0 16 18' ><path d='M0 2.6H13.6 M0 6.9H8.6 M0 11.2H13.6 M0 15.5H10.2' stroke='#c4c4c4' stroke-width='1.9' fill='none'/></svg>
<div class='a' style='left:804.4px;top:146.8px;width:1139px;height:29px;box-sizing:border-box;border:3.2px solid #282828;border-right:none'></div>
<span class='t' style='left:750.43px;top:147.40px;font:normal 400 19.6px/30px "Liberation Mono", monospace;color:#cccccc;letter-spacing:0.000px;letter-spacing:0.008px'>1</span>
<span class='t' style='left:750.43px;top:176.74px;font:normal 400 19.6px/30px "Liberation Mono", monospace;color:#6e7681;letter-spacing:0.000px;letter-spacing:0.008px'>2</span>
<span class='t' style='left:804.90px;top:176.74px;font:normal 400 19.6px/30px "Liberation Mono", monospace;color:#6c9a59;letter-spacing:0.000px;letter-spacing:0.008px'># define our server port</span>
<span class='t' style='left:750.43px;top:206.08px;font:normal 400 19.6px/30px "Liberation Mono", monospace;color:#6e7681;letter-spacing:0.000px;letter-spacing:0.008px'>3</span>
<span class='t' style='left:804.90px;top:206.08px;font:normal 400 19.6px/30px "Liberation Mono", monospace;color:#d4d4d4;letter-spacing:0.000px;letter-spacing:0.008px'>server.port=</span>
<span class='t' style='left:946.12px;top:206.08px;font:normal 400 19.6px/30px "Liberation Mono", monospace;color:#cb927a;letter-spacing:0.000px;letter-spacing:0.008px'>8080</span>
<span class='t' style='left:750.43px;top:235.42px;font:normal 400 19.6px/30px "Liberation Mono", monospace;color:#6e7681;letter-spacing:0.000px;letter-spacing:0.008px'>4</span>
<span class='t' style='left:750.43px;top:264.76px;font:normal 400 19.6px/30px "Liberation Mono", monospace;color:#6e7681;letter-spacing:0.000px;letter-spacing:0.008px'>5</span>
<span class='t' style='left:804.90px;top:264.76px;font:normal 400 19.6px/30px "Liberation Mono", monospace;color:#d4d4d4;letter-spacing:0.000px;letter-spacing:0.008px'>logging.level.web=</span>
<span class='t' style='left:1016.72px;top:264.76px;font:normal 400 19.6px/30px "Liberation Mono", monospace;color:#cb927a;letter-spacing:0.000px;letter-spacing:0.008px'>DEBUG</span>
<span class='t' style='left:750.43px;top:294.10px;font:normal 400 19.6px/30px "Liberation Mono", monospace;color:#6e7681;letter-spacing:0.000px;letter-spacing:0.008px'>6</span>
<span class='t' style='left:804.90px;top:294.10px;font:normal 400 19.6px/30px "Liberation Mono", monospace;color:#d4d4d4;letter-spacing:0.000px;letter-spacing:0.008px'>logging.level.sql=</span>
<span class='t' style='left:1016.72px;top:294.10px;font:normal 400 19.6px/30px "Liberation Mono", monospace;color:#cb927a;letter-spacing:0.000px;letter-spacing:0.008px'>DEBUG</span>
<span class='t' style='left:750.43px;top:323.44px;font:normal 400 19.6px/30px "Liberation Mono", monospace;color:#6e7681;letter-spacing:0.000px;letter-spacing:0.008px'>7</span>
<span class='t' style='left:804.90px;top:323.44px;font:normal 400 19.6px/30px "Liberation Mono", monospace;color:#d4d4d4;letter-spacing:0.000px;letter-spacing:0.008px'>logging.level.com.example=</span>
<span class='t' style='left:1110.87px;top:323.44px;font:normal 400 19.6px/30px "Liberation Mono", monospace;color:#cb927a;letter-spacing:0.000px;letter-spacing:0.008px'>DEBUG</span>
<span class='t' style='left:750.43px;top:352.78px;font:normal 400 19.6px/30px "Liberation Mono", monospace;color:#6e7681;letter-spacing:0.000px;letter-spacing:0.008px'>8</span>
<span class='t' style='left:750.43px;top:382.12px;font:normal 400 19.6px/30px "Liberation Mono", monospace;color:#6e7681;letter-spacing:0.000px;letter-spacing:0.008px'>9</span>
<span class='t' style='left:804.90px;top:382.12px;font:normal 400 19.6px/30px "Liberation Mono", monospace;color:#6c9a59;letter-spacing:0.000px;letter-spacing:0.008px'># generate the hibernate entities</span>
<span class='t' style='left:738.66px;top:411.46px;font:normal 400 19.6px/30px "Liberation Mono", monospace;color:#6e7681;letter-spacing:0.000px;letter-spacing:0.008px'>10</span>
<span class='t' style='left:804.90px;top:411.46px;font:normal 400 19.6px/30px "Liberation Mono", monospace;color:#d4d4d4;letter-spacing:0.000px;letter-spacing:0.008px'>spring.jpa.generate–ddl=</span>
<span class='t' style='left:1087.33px;top:411.46px;font:normal 400 19.6px/30px "Liberation Mono", monospace;color:#cb927a;letter-spacing:0.000px;letter-spacing:0.008px'>true</span>
<span class='t' style='left:738.66px;top:440.80px;font:normal 400 19.6px/30px "Liberation Mono", monospace;color:#6e7681;letter-spacing:0.000px;letter-spacing:0.008px'>11</span>
<span class='t' style='left:738.66px;top:470.14px;font:normal 400 19.6px/30px "Liberation Mono", monospace;color:#6e7681;letter-spacing:0.000px;letter-spacing:0.008px'>12</span>
<span class='t' style='left:804.90px;top:470.14px;font:normal 400 19.6px/30px "Liberation Mono", monospace;color:#d4d4d4;letter-spacing:0.000px;letter-spacing:0.008px'>spring.graphql.graphiql.enabled=</span>
<span class='t' style='left:1181.48px;top:470.14px;font:normal 400 19.6px/30px "Liberation Mono", monospace;color:#cb927a;letter-spacing:0.000px;letter-spacing:0.008px'>true</span>
<span class='t' style='left:738.66px;top:499.48px;font:normal 400 19.6px/30px "Liberation Mono", monospace;color:#6e7681;letter-spacing:0.000px;letter-spacing:0.008px'>13</span>
<span class='t' style='left:738.66px;top:528.82px;font:normal 400 19.6px/30px "Liberation Mono", monospace;color:#6e7681;letter-spacing:0.000px;letter-spacing:0.008px'>14</span>
<span class='t' style='left:804.90px;top:528.82px;font:normal 400 19.6px/30px "Liberation Mono", monospace;color:#d4d4d4;letter-spacing:0.000px;letter-spacing:0.008px'>spring.datasource.url=</span>
<span class='t' style='left:1063.80px;top:528.82px;font:normal 400 19.6px/30px "Liberation Mono", monospace;color:#cb927a;letter-spacing:0.000px;letter-spacing:0.008px'>jdbc:h2:mem:testdb</span>
<span class='t' style='left:738.66px;top:558.16px;font:normal 400 19.6px/30px "Liberation Mono", monospace;color:#6e7681;letter-spacing:0.000px;letter-spacing:0.008px'>15</span>
<span class='t' style='left:804.90px;top:558.16px;font:normal 400 19.6px/30px "Liberation Mono", monospace;color:#d4d4d4;letter-spacing:0.000px;letter-spacing:0.008px'>spring.datasource.driverClassName=</span>
<span class='t' style='left:1205.01px;top:558.16px;font:normal 400 19.6px/30px "Liberation Mono", monospace;color:#cb927a;letter-spacing:0.000px;letter-spacing:0.008px'>org.h2.Driver</span>
<span class='t' style='left:738.66px;top:587.50px;font:normal 400 19.6px/30px "Liberation Mono", monospace;color:#6e7681;letter-spacing:0.000px;letter-spacing:0.008px'>16</span>
<span class='t' style='left:804.90px;top:587.50px;font:normal 400 19.6px/30px "Liberation Mono", monospace;color:#d4d4d4;letter-spacing:0.000px;letter-spacing:0.008px'>spring.datasource.username=</span>
<span class='t' style='left:1122.64px;top:587.50px;font:normal 400 19.6px/30px "Liberation Mono", monospace;color:#cb927a;letter-spacing:0.000px;letter-spacing:0.008px'>sa</span>
<span class='t' style='left:738.66px;top:616.84px;font:normal 400 19.6px/30px "Liberation Mono", monospace;color:#6e7681;letter-spacing:0.000px;letter-spacing:0.008px'>17</span>
<span class='t' style='left:804.90px;top:616.84px;font:normal 400 19.6px/30px "Liberation Mono", monospace;color:#d4d4d4;letter-spacing:0.000px;letter-spacing:0.008px'>spring.datasource.password=</span>
<span class='t' style='left:1122.64px;top:616.84px;font:normal 400 19.6px/30px "Liberation Mono", monospace;color:#cb927a;letter-spacing:0.000px;letter-spacing:0.008px'>password</span>
<span class='t' style='left:738.66px;top:646.18px;font:normal 400 19.6px/30px "Liberation Mono", monospace;color:#6e7681;letter-spacing:0.000px;letter-spacing:0.008px'>18</span>
<span class='t' style='left:804.90px;top:646.18px;font:normal 400 19.6px/30px "Liberation Mono", monospace;color:#d4d4d4;letter-spacing:0.000px;letter-spacing:0.008px'>spring.jpa.database–platform=</span>
<span class='t' style='left:1146.17px;top:646.18px;font:normal 400 19.6px/30px "Liberation Mono", monospace;color:#cb927a;letter-spacing:0.000px;letter-spacing:0.008px'>org.hibernate.dialect.H2Dialect</span>
<div class='a' style='left:1949.8px;top:147.4px;transform-origin:0 0;transform:scale(0.13868);white-space:pre;font:700 19.6px/23.478px "Liberation Mono",monospace;letter-spacing:0.008px;opacity:0.9'><div style='height:23.478px'></div><div style='height:23.478px'><span style='color:#6c9a59'># define our server port</span></div><div style='height:23.478px'><span style='color:#d4d4d4'>server.port=</span><span style='color:#cb927a'>8080</span></div><div style='height:23.478px'></div><div style='height:23.478px'><span style='color:#d4d4d4'>logging.level.web=</span><span style='color:#cb927a'>DEBUG</span></div><div style='height:23.478px'><span style='color:#d4d4d4'>logging.level.sql=</span><span style='color:#cb927a'>DEBUG</span></div><div style='height:23.478px'><span style='color:#d4d4d4'>logging.level.com.example=</span><span style='color:#cb927a'>DEBUG</span></div><div style='height:23.478px'></div><div style='height:23.478px'><span style='color:#6c9a59'># generate the hibernate entities</span></div><div style='height:23.478px'><span style='color:#d4d4d4'>spring.jpa.generate–ddl=</span><span style='color:#cb927a'>true</span></div><div style='height:23.478px'></div><div style='height:23.478px'><span style='color:#d4d4d4'>spring.graphql.graphiql.enabled=</span><span style='color:#cb927a'>true</span></div><div style='height:23.478px'></div><div style='height:23.478px'><span style='color:#d4d4d4'>spring.datasource.url=</span><span style='color:#cb927a'>jdbc:h2:mem:testdb</span></div><div style='height:23.478px'><span style='color:#d4d4d4'>spring.datasource.driverClassName=</span><span style='color:#cb927a'>org.h2.Driver</span></div><div style='height:23.478px'><span style='color:#d4d4d4'>spring.datasource.username=</span><span style='color:#cb927a'>sa</span></div><div style='height:23.478px'><span style='color:#d4d4d4'>spring.datasource.password=</span><span style='color:#cb927a'>password</span></div><div style='height:23.478px'><span style='color:#d4d4d4'>spring.jpa.database–platform=</span><span style='color:#cb927a'>org.hibernate.dialect.H2Dialect</span></div></div><svg style='left:14px;top:1198px' width='30' height='28' viewBox='0 0 30 28' ><path d='M7.2 10.4 L13.6 16.5 L7.2 22.7 M20.3 4.4 L13.9 10.5 L20.3 16.7' fill='none' stroke='#f2f2f2' stroke-width='1.5'/></svg>
<svg style='left:62px;top:1198px' width='30' height='28' viewBox='0 0 30 28' ><circle cx='9.5' cy='6' r='2.6' fill='none' stroke='#cccccc' stroke-width='1.55'/><circle cx='19.7' cy='10.1' r='2.6' fill='none' stroke='#cccccc' stroke-width='1.55'/><circle cx='9.5' cy='22.1' r='2.6' fill='none' stroke='#cccccc' stroke-width='1.55'/><path d='M9.5 8.6 V19.5 M19.7 12.7 C19.7 16.4 15.6 15.4 12.4 16 C10.4 16.6 9.6 17.8 9.5 19.5' fill='none' stroke='#cccccc' stroke-width='1.55'/></svg>
<span class='t' style='left:94.60px;top:1196.80px;font:normal 400 19.9px/32px "Liberation Sans", sans-serif;color:#cccccc;letter-spacing:-0.408px;'>main</span>
<svg style='left:146px;top:1199px' width='26' height='26' viewBox='0 0 26 26' ><path d='M5.2 12.2 A7.7 7.7 0 0 1 19.4 9.2 M20.4 14 A7.7 7.7 0 0 1 6.2 17' fill='none' stroke='#cccccc' stroke-width='1.55'/><path d='M2.4 14.6 L5.2 11.2 L8.8 14 M23.2 11.6 L20.4 15 L16.8 12.2' fill='none' stroke='#cccccc' stroke-width='1.55'/></svg>
<svg style='left:192px;top:1200px' width='26' height='26' viewBox='0 0 26 26' ><circle cx='12.4' cy='12.1' r='9' fill='none' stroke='#cccccc' stroke-width='1.55'/><path d='M8.8 8.5 L16 15.7 M16 8.5 L8.8 15.7' fill='none' stroke='#cccccc' stroke-width='1.55'/></svg>
<span class='t' style='left:222.60px;top:1196.80px;font:normal 400 19.9px/32px "Liberation Sans", sans-serif;color:#cccccc;letter-spacing:0.000px;'>0</span>
<svg style='left:238px;top:1199px' width='26' height='26' viewBox='0 0 26 26' ><path d='M12.8 3.9 L22 20.6 H3.6 Z' fill='none' stroke='#cccccc' stroke-width='1.55' stroke-linejoin='round'/><path d='M12.8 9.6 V15.2 M12.8 16.8 V18.6' fill='none' stroke='#cccccc' stroke-width='1.55'/></svg>
<span class='t' style='left:268.70px;top:1196.80px;font:normal 400 19.9px/32px "Liberation Sans", sans-serif;color:#cccccc;letter-spacing:0.000px;'>0</span>
<svg style='left:305px;top:1199px' width='28' height='26' viewBox='0 0 28 26' ><path d='M13.4 9.6 L7.6 22.6 M13.4 9.6 L19.2 22.6 M10.6 16 H16.2 M8.8 20 H18' fill='none' stroke='#cccccc' stroke-width='1.55'/><circle cx='13.4' cy='8.4' r='1.4' fill='none' stroke='#cccccc' stroke-width='1.55'/><path d='M9.6 4.6 A5.4 5.4 0 0 0 9.6 12.2 M17.2 4.6 A5.4 5.4 0 0 1 17.2 12.2 M6.8 2.6 A8.6 8.6 0 0 0 6.8 14.2 M20 2.6 A8.6 8.6 0 0 1 20 14.2' fill='none' stroke='#cccccc' stroke-width='1.55'/></svg>
<span class='t' style='left:335.30px;top:1196.80px;font:normal 400 19.9px/32px "Liberation Sans", sans-serif;color:#cccccc;letter-spacing:0.000px;'>0</span>
<span class='t' style='left:1428.30px;top:1196.80px;font:normal 400 19.9px/32px "Liberation Sans", sans-serif;color:#cccccc;letter-spacing:0.230px;'>Ln 1, Col 1</span>
<span class='t' style='left:1554.40px;top:1196.80px;font:normal 400 19.9px/32px "Liberation Sans", sans-serif;color:#cccccc;letter-spacing:0.229px;'>Spaces: 4</span>
<span class='t' style='left:1672.20px;top:1196.80px;font:normal 400 19.9px/32px "Liberation Sans", sans-serif;color:#cccccc;letter-spacing:0.560px;'>UTF-8</span>
<span class='t' style='left:1758.40px;top:1196.80px;font:normal 400 19.9px/32px "Liberation Sans", sans-serif;color:#cccccc;letter-spacing:-2.619px;'>LF</span>
<span class='t' style='left:1806.30px;top:1196.80px;font:normal 400 19.9px/32px "Liberation Sans", sans-serif;color:#cccccc;letter-spacing:0.413px;'>Spring Boot Properties</span>
<svg style='left:2038px;top:1200px' width='30' height='26' viewBox='0 0 30 26' ><path d='M3.2 15.8 C3.2 13.8 4.6 12.6 6.6 12.4 H22.6 C24.6 12.6 26 13.8 26 15.8 C26 20.8 20.4 23.6 14.6 23.6 C8.8 23.6 3.2 20.8 3.2 15.8 Z' fill='#cccccc'/><path d='M8.2 11.6 H21 V19.4 C19 20.5 17 21 14.6 21 C12.2 21 10.2 20.5 8.2 19.4 Z' fill='#181818'/><rect x='6.6' y='4.2' width='8' height='8.6' rx='3.4' fill='none' stroke='#cccccc' stroke-width='2'/><rect x='14.6' y='4.2' width='8' height='8.6' rx='3.4' fill='none' stroke='#cccccc' stroke-width='2'/><path d='M12.2 15.9 V18.5 M17.4 15.9 V18.5' stroke='#cccccc' stroke-width='2.1' stroke-linecap='round' fill='none'/></svg>
<svg style='left:2090px;top:1198px' width='26' height='28' viewBox='0 0 26 28' ><path d='M3.6 20.4 H20 C18.4 17.8 18.6 14 18.4 10.6 C18.2 6.6 15.4 4.4 11.8 4.4 C8.2 4.4 5.4 6.6 5.200 10.6 C5 14 5.2 17.8 3.6 20.4 Z M9.6 20.6 A2.3 2.3 0 0 0 14 20.6' fill='none' stroke='#cccccc' stroke-width='1.55' stroke-linejoin='round'/></svg>
</div>
</body></html>
